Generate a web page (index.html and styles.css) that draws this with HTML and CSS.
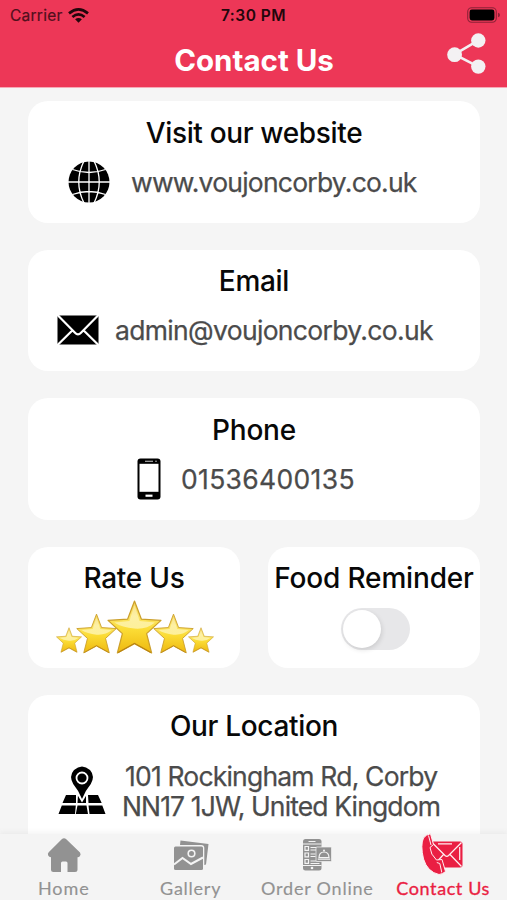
FILE: index.html
```html
<!DOCTYPE html>
<html lang="en">
<head>
<meta charset="utf-8">
<title>Contact Us</title>
<link rel="stylesheet" href="styles.css">
</head>
<body>
<svg class="defs" width="0" height="0" aria-hidden="true">
  <defs>
    <linearGradient id="gold" x1="0" y1="0" x2="0" y2="1">
      <stop offset="0" stop-color="#f3d257"/>
      <stop offset=".3" stop-color="#fbe56a"/>
      <stop offset=".55" stop-color="#fbdc35"/>
      <stop offset="1" stop-color="#eeb80f"/>
    </linearGradient>
    <linearGradient id="shine" x1="0" y1="0" x2="0" y2="1">
      <stop offset="0" stop-color="#fff" stop-opacity=".3"/>
      <stop offset="1" stop-color="#fffbd0" stop-opacity=".65"/>
    </linearGradient>
    <symbol id="star" viewBox="0 0 54 53">
      <path d="M27 1 33.700 18.700 53 20 38.900 33 43.800 52 27 43 10.200 52 15.100 33 1 20 20.300 18.700Z" fill="url(#gold)" stroke="#cb9f2b" stroke-width="1.200" stroke-linejoin="round"/>
      <path d="M27 5 32 20.500 47 22Q39 29 27 28T7 22L22 20.500Z" fill="url(#shine)"/>
      <path d="m11 51.500 16-9 16 9" fill="none" stroke="#b98210" stroke-width="1"/>
    </symbol>
  </defs>
</svg>
<div class="app">
  <header class="header">
    <div class="status">
      <div class="carrier"><span>Carrier</span>
        <svg width="21" height="15" viewBox="0 0 21 15" fill="none" stroke="#22060b" stroke-width="2.7"><path d="M1 5.4Q10.500-2.600 20 5.400"/><path d="M4.400 9Q10.500 3.800 16.600 9"/><path d="M10.500 14.700 7.100 11.300Q10.500 8.700 13.900 11.300Z" fill="#22060b" stroke="none"/></svg>
      </div>
      <div class="time">7:30 PM</div>
      <svg class="battery" width="33" height="16" viewBox="0 0 33 16"><rect x=".7" y=".7" width="28.600" height="14.600" rx="4" fill="none" stroke="#8d2237" stroke-width="1.100"/><rect x="2.600" y="2.600" width="24.800" height="10.800" rx="2.300" fill="#000"/><path d="M31 5.800q2 .5 2 2.200t-2 2.200Z" fill="#8d2237"/></svg>
    </div>
    <div class="bar">
      <h1>Contact Us</h1>
      <svg class="share" width="39" height="41" viewBox="0 0 39 41"><path d="M31.300 7.300 7.500 21.500l23.800 12.200" fill="none" stroke="#f3f1f3" stroke-width="2.600"/><g fill="#f3f1f3"><circle cx="31.300" cy="7.500" r="7.200"/><circle cx="7.600" cy="21.700" r="7.400"/><circle cx="31.300" cy="33.600" r="7.200"/></g></svg>
    </div>
  </header>
  <main class="content">
    <section class="card">
      <h2 class="t-web">Visit our website</h2>
      <div class="row web">
        <svg width="42" height="42" viewBox="0 0 42 42"><circle cx="21" cy="21" r="20.500" fill="#000"/><g fill="none" stroke="#fff" stroke-width="1.300"><path d="M21 0v42M0 21h42M4.500 8.500Q21 14.500 37.500 8.500M4.500 33.500Q21 27.500 37.500 33.500M16 0Q5.500 21 16 42M26 0Q36.500 21 26 42"/></g></svg>
        <span>www.voujoncorby.co.uk</span>
      </div>
    </section>
    <section class="card">
      <h2 class="t-mail">Email</h2>
      <div class="row mail">
        <svg width="42" height="30" viewBox="0 0 42 30"><path d="M.5.500h41v29H.5Z"/><path d="m0-.5 18 18.300q3 3.200 6 0L42-.5M0 30.500 15.300 15.500M42 30.500 26.700 15.500" fill="none" stroke="#fff" stroke-width="2.200"/></svg>
        <span>admin@voujoncorby.co.uk</span>
      </div>
    </section>
    <section class="card">
      <h2 class="t-phone">Phone</h2>
      <div class="row phone">
        <svg width="24" height="42" viewBox="0 0 24 42"><rect x=".5" y=".5" width="23" height="41" rx="3"/><path d="M2.500 5.800h19v28h-19Z" fill="#fff"/><path d="M8 3.300h8" stroke="#aaa" stroke-width="1.200"/><circle cx="19" cy="3.300" r=".8" fill="#bbb"/><rect x="8.500" y="36.600" width="7" height="2.200" fill="#fff"/></svg>
        <span>01536400135</span>
      </div>
    </section>
    <div class="pair">
      <section class="card">
        <h2 class="t-rate">Rate Us</h2>
        <div class="stars">
          <svg class="s"><use href="#star"/></svg><svg class="m"><use href="#star"/></svg><svg class="l"><use href="#star"/></svg><svg class="m"><use href="#star"/></svg><svg class="s"><use href="#star"/></svg>
        </div>
      </section>
      <section class="card">
        <h2 class="t-food">Food Reminder</h2>
        <div class="switch"><div class="knob"></div></div>
      </section>
    </div>
    <section class="card last">
      <h2 class="t-loc">Our Location</h2>
      <div class="row loc">
        <svg width="48" height="50" viewBox="0 0 48 50"><path d="M8 29h10v8H4.500ZM20 29h8v8h-8.500ZM30 29h10l3.700 8H30.500ZM3.800 39.500h14l-.8 8.500H.5ZM19.500 39.500h9L30 48H17.800ZM30.500 39.500h13.800l3.200 8.500H31.500Z"/><path d="M24 36.500 14 20h20Z" fill="#fff"/><path d="M24 33Q21 25 15.200 18 10.500 10 16 4q8-7 16 0 5.500 6 .8 14Q27 25 24 33Z"/><circle cx="24" cy="12" r="5.500" fill="none" stroke="#fff" stroke-width="1.800"/></svg>
        <div class="address"><div class="a1">101 Rockingham Rd, Corby</div><div class="a2">NN17 1JW, United Kingdom</div></div>
      </div>
    </section>
  </main>
  <nav class="tabs">
    <a class="tab">
      <svg width="36" height="36" viewBox="0 0 36 36"><path d="M18 1.200q1.200 0 2 .8L34 15.500q1.300 2-.2 3.800-.8 1-2.300.9V32.500q0 2.500-2.500 2.500H21.500V26q0-1.500-1.500-1.500h-3.500q-1.500 0-1.500 1.500v9H7.500Q5 35 5 32.500V20.200q-2 0-2.800-1.700-.9-1.800.5-3.200L16 2q.8-.8 2-.8Z"/></svg>
      <span class="n1">Home</span>
    </a>
    <a class="tab">
      <svg width="36" height="36" viewBox="0 0 36 36"><path d="M7.500 3.500 35.500 7 33 27.500l-1.700.5V11q0-3-3-3H7Z"/><rect x="1" y="9.500" width="29" height="23.500" rx="1.500"/><path d="m1 27.500 8.500-6.500 8.500 6 12-6.500" fill="none" stroke="#f4f4f4" stroke-width="2"/><circle cx="18.500" cy="16.500" r="3.300" fill="none" stroke="#f4f4f4" stroke-width="1.600"/></svg>
      <span class="n2">Gallery</span>
    </a>
    <a class="tab">
      <svg width="30" height="36" viewBox="0 0 30 36"><rect x="1" y="2" width="18.500" height="31.500" rx="2.500"/><path d="M1 7h18.500M1 28.500h18.500" stroke="#f4f4f4" stroke-width="1.200"/><path d="M6.500 4.500h7" stroke="#f4f4f4"/><circle cx="10" cy="31" r="1.300" fill="#f4f4f4"/><g fill="none" stroke="#f4f4f4" stroke-width="1.200"><path d="M3 9.500h3.500v3.800H3ZM3 16h3.500v3.800H3ZM3 22.500h3.500v3.800H3ZM8.500 10.500h9M8.500 13h9M8.500 17h5M8.500 19.500h5M8.500 24h9M8.500 26.500h9"/></g><rect x="14" y="10" width="15.500" height="14.500" rx="1" stroke="#f4f4f4" stroke-width=".7"/><path d="M17 20.500q.2-5.500 5-5.500t5 5.500ZM15.800 22.200h12.400" fill="none" stroke="#f4f4f4" stroke-width="1.200"/><circle cx="22" cy="13.500" r="1" fill="#f4f4f4"/></svg>
      <span class="n3">Order Online</span>
    </a>
    <a class="tab active">
      <svg width="42" height="42" viewBox="0 0 42 42"><path d="M11 8.500h28q2.500 0 2.500 2.500v21q0 2.500-2.500 2.500H18L7 22Z"/><g fill="none" stroke="#fff0f2" stroke-width="1.200"><path d="m11 9.500 13 13q1.800 1.700 3.600 0L40.500 9.500M13 32l9.500-10.500M29 21.500 40.500 33.500M17 10.800h14M38.700 14v13"/></g><path d="M2.500 5Q5 1.500 9.500.8L12.500 11.500 9 14.500q.5 7 6.500 12.500l5.500-.5 3.500 12q-2.500 2.500-6.500 3Q6.500 39 2.500 26-.8 12 2.500 5Z" stroke="#fff0f2" stroke-width="1"/><path d="m7.500 2.500 2.500 9.500M15.800 29.500l3 1 2 9" fill="none" stroke="#fff0f2" stroke-width="1"/></svg>
      <span class="n4">Contact Us</span>
    </a>
  </nav>
</div>
</body>
</html>
```
FILE: styles.css
```css
* { box-sizing: border-box; }
body { margin: 0; font-family: Inter, "Liberation Sans", sans-serif; background: #f5f5f5; }
.defs { display: block; }
svg { flex: none; display: block; }
h1, h2 { margin: 0; white-space: nowrap; }
.app { width: 507px; height: 900px; overflow: hidden; display: flex; flex-direction: column; }

.header { flex: none; height: 88px; background: #ed3757; border-bottom: 1px solid #f6a9b6; }
.status { height: 30px; padding: 0 8px 0 10px; display: grid; grid-template-columns: 1fr auto 1fr; align-items: center; color: #22060b; font-size: 15.500px; }
.carrier { display: flex; align-items: center; gap: 6px; color: #510f1c; letter-spacing: .25px; -webkit-text-stroke: .2px; }
.carrier svg { margin-left: -1px; }
.time { font-weight: 600; letter-spacing: .5px; margin-left: -2px; }
.battery { justify-self: end; margin-right: -1px; margin-top: -1px; }
.bar { height: 57px; display: grid; grid-template-columns: 1fr auto 1fr; padding-right: 21px; padding-left: 22px; }
h1 { grid-column: 2; color: #fff; font-size: 29.500px; font-weight: 700; line-height: 60px; letter-spacing: 0; }
.share { justify-self: end; margin-top: 3px; }

.content { flex: 1; min-height: 0; overflow: hidden; padding: 13px 27px 0 28px; display: flex; flex-direction: column; gap: 27px; }
.card { flex: none; height: 121.500px; background: #fff; border-radius: 20px; padding-top: 13.600px; display: flex; flex-direction: column; align-items: center; }
.pair .card { padding-top: 13.400px; }
.card.last { height: 160px; padding-top: 13.400px; }
.pair { display: grid; grid-template-columns: 212px 212px; gap: 28px; }
h2 { font-size: 28px; line-height: 36px; font-weight: 500; color: #080808; }
.t-web { letter-spacing: -.34px; }
.t-mail { letter-spacing: -.3px; margin-top: -.3px; margin-bottom: .3px; }
.t-phone { letter-spacing: -.2px; }
.t-rate { letter-spacing: -.25px; }
.t-food { letter-spacing: -.17px; }
.t-loc { letter-spacing: -.32px; }
.row { align-self: stretch; height: 42px; margin-top: 10.200px; display: flex; align-items: center; color: #4b4b4b; font-size: 26.500px; white-space: nowrap; -webkit-text-stroke: .25px #4b4b4b; }
.row svg { -webkit-text-stroke: 0; }
.web { padding-left: 40px; gap: 21px; letter-spacing: -.78px; }
.mail { padding-left: 29px; gap: 16px; letter-spacing: -.67px; }
.phone { padding-left: 109px; gap: 20px; letter-spacing: .33px; }
.loc { height: 62px; padding-left: 30px; gap: 16px; margin-top: 15.500px; }
.address { line-height: 30px; }
.a1 { margin-left: 3px; letter-spacing: -.81px; }
.a2 { letter-spacing: -.87px; }

.stars { display: flex; align-items: flex-end; margin-top: 4.200px; margin-left: 1px; }
.s { width: 26px; height: 28px; }
.m { width: 41px; height: 41px; margin: 0 -6px; }
.l { width: 55px; height: 54px; margin: 0 -3.500px; }
.switch { width: 69px; height: 42px; margin-top: 12.200px; margin-left: 2px; border-radius: 21px; background: #e7e7e9; padding: 2px; }
.knob { width: 38px; height: 38px; border-radius: 50%; background: #fff; box-shadow: 1px 2px 5px rgba(0,0,0,.12); }

.tabs { flex: none; height: 66px; background: #f4f4f4; display: grid; grid-template-columns: repeat(4, 1fr); font-family: Lato, sans-serif; font-size: 18px; color: #929292; fill: #929292; box-shadow: 0 -2px 5px rgba(120,120,120,.08); }
.tab { display: flex; flex-direction: column; align-items: center; white-space: nowrap; padding-left: 1px; -webkit-text-stroke: .15px; }
.tab svg { height: 42px; }
.tab span { line-height: 20px; margin-top: 2px; }
.n1 { letter-spacing: 1px; }
.n2 { letter-spacing: .75px; }
.n3 { letter-spacing: .78px; }
.n4 { letter-spacing: .6px; }
.active { color: #ea1f43; fill: #ea1f43; -webkit-text-stroke: .35px #ea1f43; padding: 0 1px 0 0; }
.active svg { margin-left: -2px; margin-top: -1px; margin-bottom: 1px; }
```
